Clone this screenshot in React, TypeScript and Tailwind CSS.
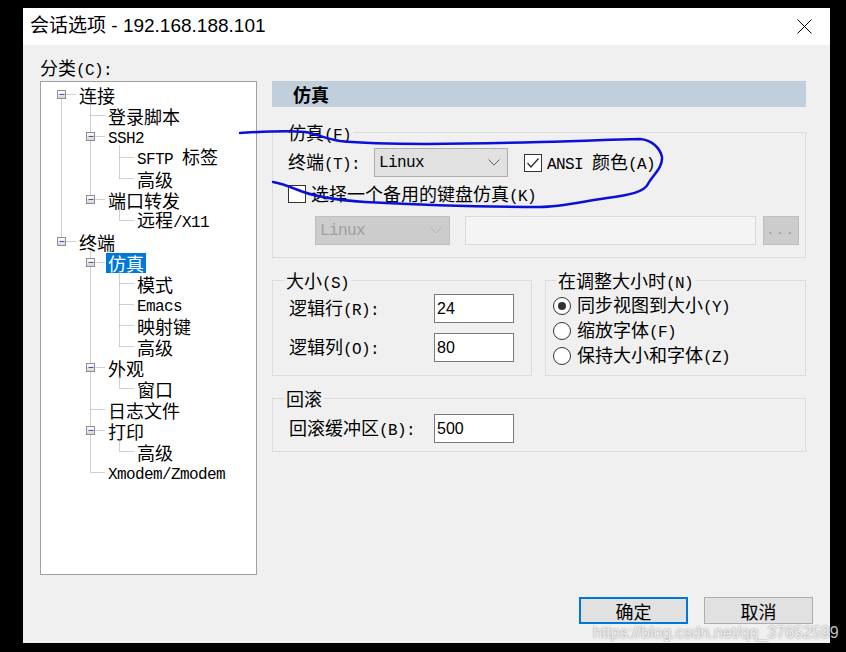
import React from "react"

type Node = { t: string; l: number; exp?: boolean; sel?: boolean }

const tree: Node[] = [
  { t: "连接", l: 0, exp: true },
  { t: "登录脚本", l: 1 },
  { t: "SSH2", l: 1, exp: true },
  { t: "SFTP 标签", l: 2 },
  { t: "高级", l: 2 },
  { t: "端口转发", l: 1, exp: true },
  { t: "远程/X11", l: 2 },
  { t: "终端", l: 0, exp: true },
  { t: "仿真", l: 1, exp: true, sel: true },
  { t: "模式", l: 2 },
  { t: "Emacs", l: 2 },
  { t: "映射键", l: 2 },
  { t: "高级", l: 2 },
  { t: "外观", l: 1, exp: true },
  { t: "窗口", l: 2 },
  { t: "日志文件", l: 1 },
  { t: "打印", l: 1, exp: true },
  { t: "高级", l: 2 },
  { t: "Xmodem/Zmodem", l: 1 },
]

const indent = ["pl-[36px]", "pl-[65px]", "pl-[94px]"]

// 中文用 CJK 字体，拉丁字符用等宽字体（模仿宋体的半角）
function Mix({ s }: { s: string }) {
  const parts = s.match(/[\x00-\x7f]+|[^\x00-\x7f]+/g) ?? []
  return (
    <>
      {parts.map((p, i) =>
        /^[\x00-\x7f]/.test(p) ? (
          <span key={i} className="font-['Liberation_Mono',monospace] text-[16px] tracking-[-0.6px]">
            {p}
          </span>
        ) : (
          <span key={i}>{p}</span>
        )
      )}
    </>
  )
}

function TreeLines() {
  const cx = (l: number) => 20.5 + 29 * l
  const cy = (i: number) => 12.5 + 21 * i
  const dots: React.ReactNode[] = []
  const boxes: React.ReactNode[] = []
  tree.forEach((n, i) => {
    // 找上一个同级节点或父节点
    let from = -1
    for (let j = i - 1; j >= 0; j--) {
      if (tree[j].l === n.l) {
        from = cy(j)
        break
      }
      if (tree[j].l < n.l) {
        from = cy(j) + 9
        break
      }
    }
    const x = cx(n.l)
    if (from >= 0) {
      dots.push(<line key={"v" + i} x1={x} y1={from} x2={x} y2={cy(i)} />)
    }
    dots.push(<line key={"h" + i} x1={x} y1={cy(i)} x2={35 + 29 * n.l} y2={cy(i)} />)
    if (n.exp) {
      boxes.push(
        <g key={"b" + i}>
          <defs>
            <linearGradient id={"g" + i} x1="0" y1="0" x2="0" y2="1">
              <stop offset="0" stopColor="#ffffff" />
              <stop offset="1" stopColor="#d4d4d4" />
            </linearGradient>
          </defs>
          <rect x={x - 4} y={cy(i) - 4} width="8" height="8" fill={`url(#g${i})`} stroke="#8e8f8f" />
          <line x1={x - 2} y1={cy(i)} x2={x + 3} y2={cy(i)} stroke="#3c5bb0" />
        </g>
      )
    }
  })
  return (
    <svg className="absolute inset-0 pointer-events-none" width="215" height="492">
      <g stroke="#a0a0a0" strokeDasharray="1 1">{dots}</g>
      {boxes}
    </svg>
  )
}

function CheckBox({ checked }: { checked?: boolean }) {
  return (
    <div className="w-[18px] h-[18px] border border-[#333333] bg-white flex items-center justify-center shrink-0">
      {checked && (
        <svg width="14" height="12" viewBox="0 0 14 12">
          <polyline points="1.5,6 5,10 12.5,1.5" fill="none" stroke="#333333" strokeWidth="1.4" />
        </svg>
      )}
    </div>
  )
}

function Radio({ on, label }: { on?: boolean; label: string }) {
  return (
    <div className="h-[25px] flex items-center">
      <div className="w-[18px] h-[18px] rounded-full border border-[#333333] bg-white flex items-center justify-center shrink-0">
        {on && <div className="w-[8px] h-[8px] rounded-full bg-[#333333]" />}
      </div>
      <span className="ml-[6px]">
        <Mix s={label} />
      </span>
    </div>
  )
}

function Chevron({ color }: { color: string }) {
  return (
    <svg width="12" height="7" viewBox="0 0 12 7">
      <polyline points="0.5,0.5 6,6 11.5,0.5" fill="none" stroke={color} strokeWidth="1" />
    </svg>
  )
}

function NumInput({ v }: { v: string }) {
  return (
    <div className="w-[80px] h-[29px] border border-[#7a7a7a] bg-white flex items-center pl-[2px] font-['Liberation_Sans',sans-serif] text-[16px]">
      {v}
    </div>
  )
}

export default function App() {
  return (
    <div className="w-[846px] h-[652px] bg-black relative overflow-hidden pl-[23px] pt-[8px] font-['Noto_Sans_CJK_SC',sans-serif] text-[18px] text-black">
      <div className="w-[807px] h-[635px] flex flex-col">
        {/* 标题栏 */}
        <div className="h-[37px] bg-white flex items-center justify-between pl-[7px] pr-[18px]">
          <span className="font-['Liberation_Sans','Noto_Sans_CJK_SC',sans-serif] text-[19px]">
            会话选项 - 192.168.188.101
          </span>
          <svg width="15" height="15" viewBox="0 0 15 15">
            <line x1="0.5" y1="0.5" x2="14.5" y2="14.5" stroke="#000" strokeWidth="1" />
            <line x1="14.5" y1="0.5" x2="0.5" y2="14.5" stroke="#000" strokeWidth="1" />
          </svg>
        </div>

        <div className="flex-1 bg-[#f0f0f0] flex flex-col pt-[12px] pb-[19px] pl-[17px] pr-[17px]">
          <div className="flex gap-[15px]">
            {/* 左侧分类树 */}
            <div className="w-[217px] flex flex-col">
              <div className="h-[20px] leading-[20px]">
                <Mix s="分类(C):" />
              </div>
              <div className="mt-[4px] h-[494px] border border-[#a0a0a0] bg-white relative pt-[2px]">
                <TreeLines />
                {tree.map((n, i) => (
                  <div key={i} className={`h-[21px] flex items-center ${indent[n.l]}`}>
                    <span
                      className={`px-[2px] leading-[20px] whitespace-nowrap ${
                        n.sel ? "bg-[#0078d7] text-white" : ""
                      }`}
                    >
                      <Mix s={n.t} />
                    </span>
                  </div>
                ))}
              </div>
            </div>

            {/* 右侧设置 */}
            <div className="w-[534px] pt-[24px] flex flex-col">
              <div className="h-[26px] bg-[#c1cfdc] flex items-center pl-[21px] font-bold">仿真</div>

              <fieldset className="mt-[15px] border border-[#dcdcdc] pl-[15px] pr-[6px] pb-[12px]">
                <legend className="ml-[-2px] px-[2px] h-[20px] leading-[20px]">
                  <Mix s="仿真(F)" />
                </legend>
                <div className="mt-[6px] h-[29px] flex items-center">
                  <div className="w-[86px]">
                    <Mix s="终端(T):" />
                  </div>
                  <div className="w-[134px] h-[29px] bg-[#e1e1e1] border border-[#adadad] flex items-center justify-between pl-[4px] pr-[7px]">
                    <span className="font-['Liberation_Mono',monospace] text-[16px] tracking-[-0.6px]">Linux</span>
                    <Chevron color="#606060" />
                  </div>
                  <div className="ml-[16px]">
                    <CheckBox checked />
                  </div>
                  <span className="ml-[5px]">
                    <Mix s="ANSI 颜色(A)" />
                  </span>
                </div>
                <div className="mt-[7px] h-[20px] flex items-center">
                  <CheckBox />
                  <span className="ml-[5px]">
                    <Mix s="选择一个备用的键盘仿真(K)" />
                  </span>
                </div>
                <div className="mt-[12px] h-[29px] flex pl-[27px]">
                  <div className="w-[135px] h-[29px] bg-[#cccccc] border border-[#bfbfbf] flex items-center justify-between pl-[4px] pr-[7px]">
                    <span className="font-['Liberation_Mono',monospace] text-[16px] tracking-[-0.6px] text-[#a0a0a0]">
                      Linux
                    </span>
                    <Chevron color="#b5b5b5" />
                  </div>
                  <div className="ml-[15px] w-[291px] h-[29px] border border-[#d9d9d9] bg-[#f4f4f4]" />
                  <div className="ml-[7px] w-[36px] h-[29px] bg-[#cccccc] border border-[#bfbfbf] flex items-center justify-center text-[#9a9a9a] text-[13px] font-['Liberation_Mono',monospace] tracking-[2px]">
                    ...
                  </div>
                </div>
              </fieldset>

              <div className="mt-[12px] flex gap-[13px]">
                <fieldset className="w-[260px] border border-[#dcdcdc] pl-[16px] pb-[13px]">
                  <legend className="ml-[-5px] px-[2px] h-[20px] leading-[20px]">
                    <Mix s="大小(S)" />
                  </legend>
                  <div className="mt-[4px] h-[29px] flex items-center">
                    <div className="w-[145px]">
                      <Mix s="逻辑行(R):" />
                    </div>
                    <NumInput v="24" />
                  </div>
                  <div className="mt-[10px] h-[29px] flex items-center">
                    <div className="w-[145px]">
                      <Mix s="逻辑列(O):" />
                    </div>
                    <NumInput v="80" />
                  </div>
                </fieldset>
                <fieldset className="flex-1 border border-[#dcdcdc] pl-[7px]">
                  <legend className="ml-[3px] px-[2px] h-[20px] leading-[20px]">
                    <Mix s="在调整大小时(N)" />
                  </legend>
                  <div className="mt-[3px]">
                    <Radio on label="同步视图到大小(Y)" />
                    <Radio label="缩放字体(F)" />
                    <Radio label="保持大小和字体(Z)" />
                  </div>
                </fieldset>
              </div>

              <fieldset className="mt-[12px] border border-[#dcdcdc] pl-[16px] pb-[8px]">
                <legend className="ml-[-5px] px-[2px] h-[20px] leading-[20px]">回滚</legend>
                <div className="mt-[6px] h-[29px] flex items-center">
                  <div className="w-[145px]">
                    <Mix s="回滚缓冲区(B):" />
                  </div>
                  <NumInput v="500" />
                </div>
              </fieldset>
            </div>
          </div>

          <div className="mt-[22px] flex justify-end gap-[16px]">
            <button className="w-[109px] h-[27px] bg-[#e1e1e1] border-2 border-[#0078d7] flex items-center justify-center leading-none">
              确定
            </button>
            <button className="w-[109px] h-[27px] bg-[#e1e1e1] border border-[#adadad] flex items-center justify-center leading-none">
              取消
            </button>
          </div>
        </div>
      </div>

      {/* 手绘的蓝色圈注 */}
      <svg className="absolute left-0 top-0 pointer-events-none" width="846" height="652">
        <path
          d="M240,133 C258,132 285,130 305,132 C318,134 325,139 340,141 C380,145 470,144 540,142 C590,141 620,139 640,139 C652,140 660,148 662,157 C663,168 652,176 648,184 C644,192 630,195 607,198 C580,202 560,207 540,207 C500,207 420,205 365,202 C335,200 315,197 298,190 C288,186 280,183 273,182"
          fill="none"
          stroke="#0a10d8"
          strokeWidth="2.5"
          strokeLinecap="round"
          strokeLinejoin="round"
        />
      </svg>

      {/* 水印 */}
      <div className="absolute left-[593px] top-[621px] font-['Liberation_Sans',sans-serif] text-[16px] text-white/75 [text-shadow:0_0_2px_rgba(0,0,0,0.45)] whitespace-nowrap">
        https://blog.csdn.net/qq_37652599
      </div>
    </div>
  )
}
